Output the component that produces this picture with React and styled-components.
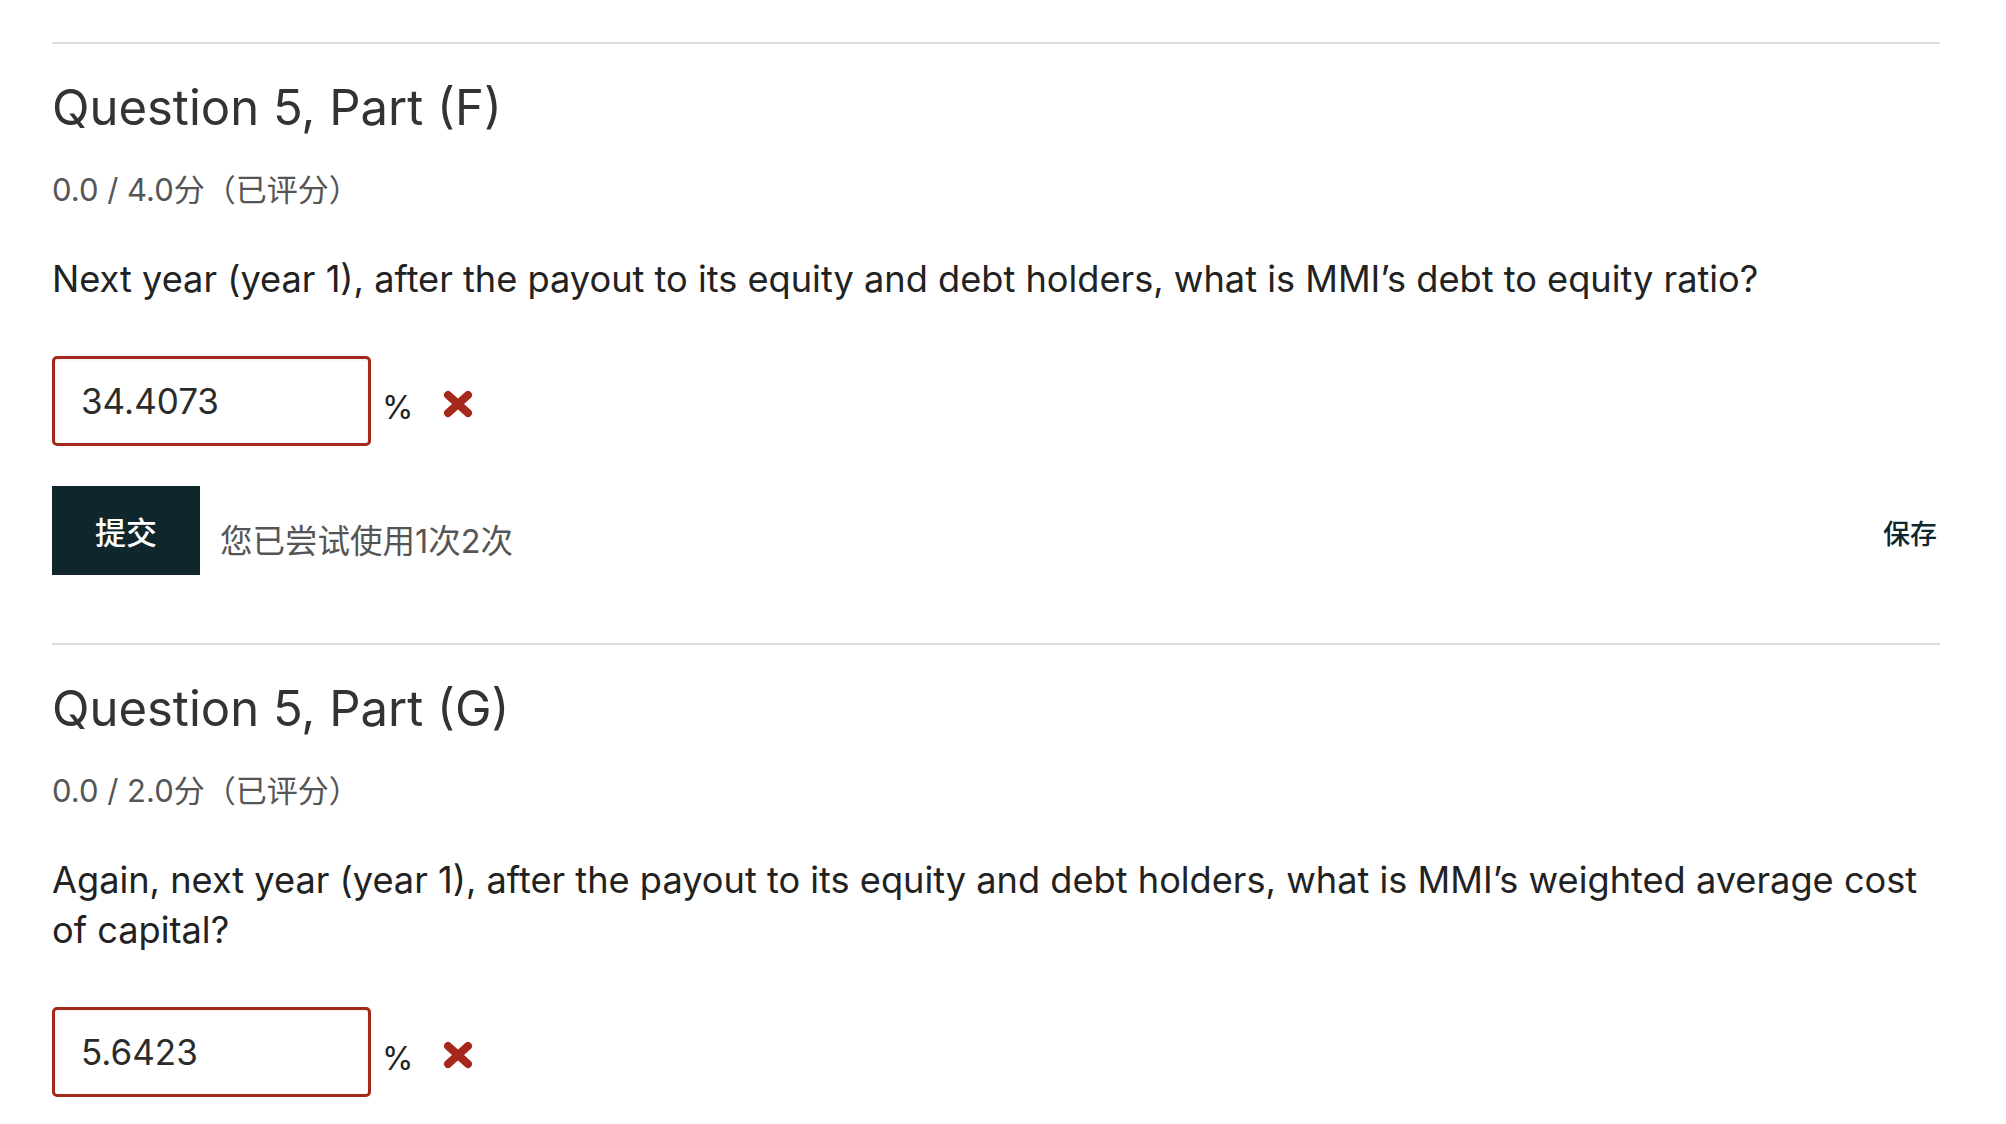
import React from "react";
import styled, { createGlobalStyle } from "styled-components";

const Global = createGlobalStyle`
  html, body { margin: 0; padding: 0; background: #ffffff; }
  body { font-family: Inter, "Noto Sans CJK SC", sans-serif; color: #222; }
  * { box-sizing: border-box; }
`;

const Page = styled.main`
  padding: 42px 66px 0 52px;
`;

const Section = styled.section`
  border-top: 2px solid #dddddd;
  padding-top: 35px;
  padding-bottom: 68px;
`;

const Heading = styled.h2`
  margin: 0;
  font-family: Inter, "Noto Sans CJK SC", sans-serif;
  font-weight: 400;
  font-size: 49px;
  line-height: 58px;
  color: #333333;
`;

const Score = styled.div`
  margin-top: 33px;
  font-size: 31px;
  line-height: 40px;
  color: #555555;
`;

const Prompt = styled.p`
  margin: 44px 0 0;
  font-size: 36.2px;
  line-height: 50px;
  color: #222222;
`;

const AnswerRow = styled.div`
  display: flex;
  align-items: center;
  margin-top: 52px;
`;

const AnswerInput = styled.input`
  width: 319px;
  height: 90px;
  border: 3px solid #a5281b;
  border-radius: 5px;
  padding: 0 26px;
  font-family: Inter, sans-serif;
  font-size: 35px;
  color: #2b2b2b;
  background: #fff;
  outline: none;
  box-shadow: inset 0 1px 3px rgba(0, 0, 0, 0.08);
`;

const Unit = styled.span`
  margin-left: 11px;
  margin-top: 12px;
  font-size: 32px;
  color: #222;
`;

const WrongMark = styled.svg`
  margin-left: 30px;
  margin-top: 6px;
  width: 30px;
  height: 28px;
`;

const Actions = styled.div`
  display: flex;
  align-items: center;
  margin-top: 40px;
`;

const SubmitButton = styled.button`
  height: 89px;
  padding: 0 43px;
  border: none;
  background: #10262d;
  color: #ffffff;
  font-family: Inter, "Noto Sans CJK SC", sans-serif;
  font-size: 31px;
  font-weight: 500;
  cursor: pointer;
`;

const Attempts = styled.span`
  margin-left: 20px;
  margin-top: 16px;
  font-size: 32.5px;
  color: #555555;
`;

const SaveLink = styled.button`
  margin-left: auto;
  margin-top: 4px;
  border: none;
  background: none;
  padding: 0 3px 0 0;
  font-family: Inter, "Noto Sans CJK SC", sans-serif;
  font-size: 27px;
  font-weight: 500;
  color: #10262d;
  cursor: pointer;
`;

const Cross = () => (
  <WrongMark viewBox="0 0 30 28" aria-label="incorrect">
    <path
      d="M5 5 L25 23 M25 5 L5 23"
      stroke="#a5281b"
      strokeWidth="8"
      strokeLinecap="round"
      fill="none"
    />
  </WrongMark>
);

const Question = ({ title, score, prompt, value, showActions }) => (
  <Section>
    <Heading>{title}</Heading>
    <Score>{score}</Score>
    <Prompt>{prompt}</Prompt>
    <AnswerRow>
      <AnswerInput defaultValue={value} />
      <Unit>%</Unit>
      <Cross />
    </AnswerRow>
    {showActions && (
      <Actions>
        <SubmitButton>提交</SubmitButton>
        <Attempts>您已尝试使用1次2次</Attempts>
        <SaveLink>保存</SaveLink>
      </Actions>
    )}
  </Section>
);

export default function App() {
  return (
    <>
      <Global />
      <Page>
        <Question
          title="Question 5, Part (F)"
          score="0.0 / 4.0分（已评分）"
          prompt="Next year (year 1), after the payout to its equity and debt holders, what is MMI’s debt to equity ratio?"
          value="34.4073"
          showActions
        />
        <Question
          title="Question 5, Part (G)"
          score="0.0 / 2.0分（已评分）"
          prompt="Again, next year (year 1), after the payout to its equity and debt holders, what is MMI’s weighted average cost of capital?"
          value="5.6423"
        />
      </Page>
    </>
  );
}
